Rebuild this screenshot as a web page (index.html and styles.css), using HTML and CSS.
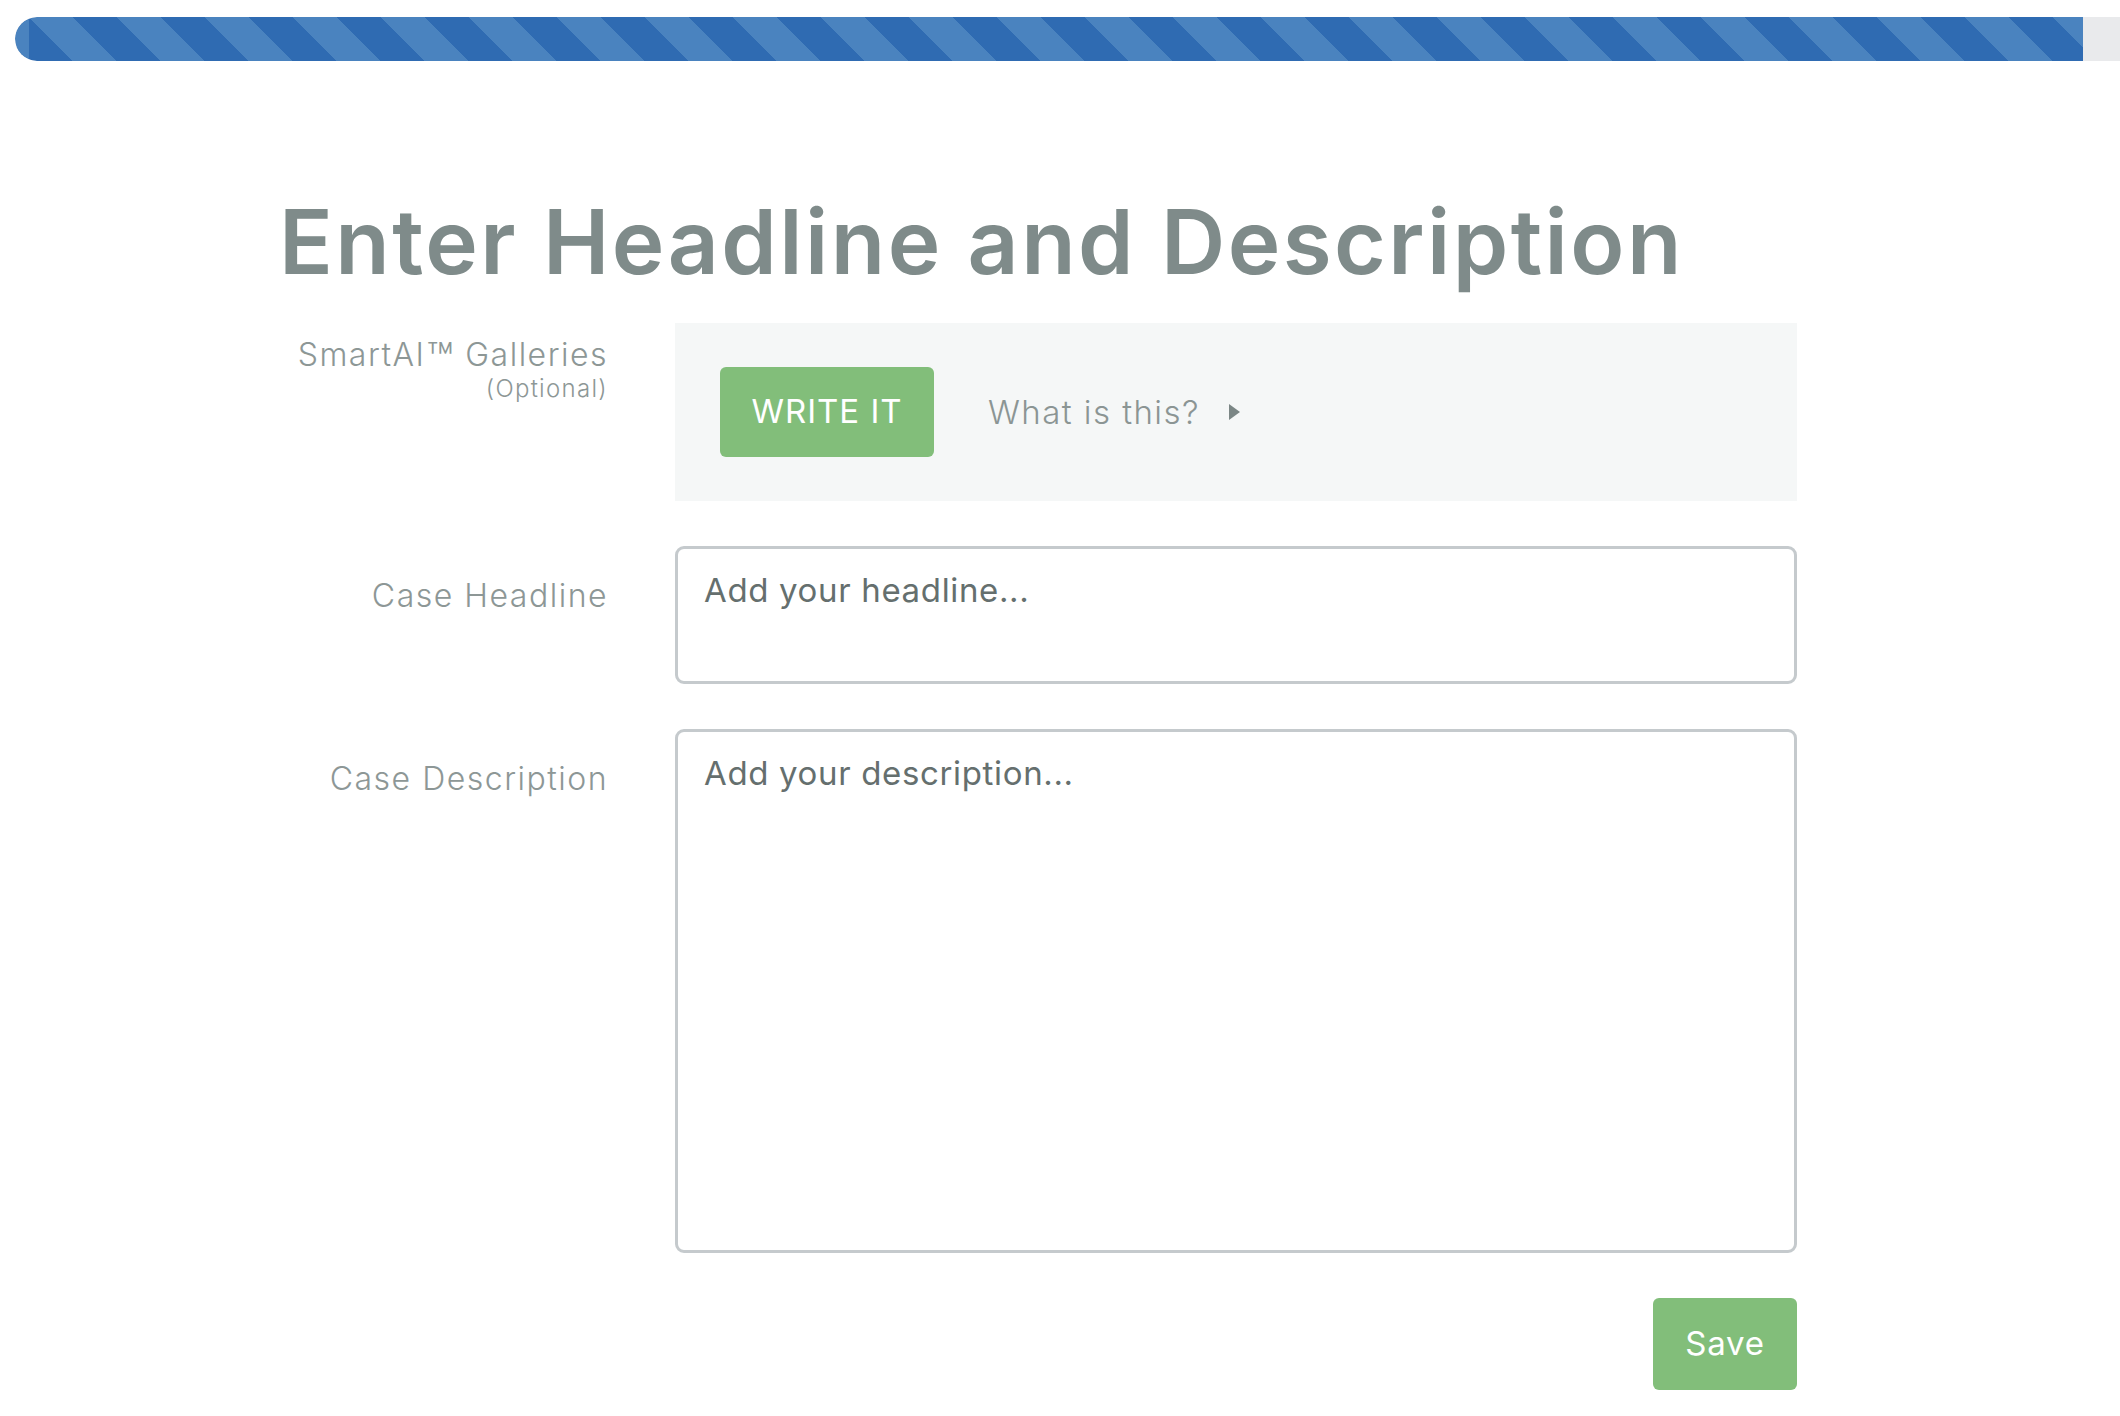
FILE: index.html
```html
<!DOCTYPE html>
<html lang="en">
<head>
<meta charset="utf-8">
<title>Enter Headline and Description</title>
<link rel="stylesheet" href="styles.css">
</head>
<body>
<div class="progress">
  <div class="progress-bar" style="width: 98.24%"></div>
</div>

<main class="page">
  <h1 class="title">Enter Headline and Description</h1>

  <div class="form">
    <div class="label label-smart">
      <div class="label-main">SmartAI<span class="tm">™</span>Galleries</div>
      <div class="label-sub">(Optional)</div>
    </div>
    <div class="smart-panel">
      <button class="btn btn-green btn-write" type="button">WRITE IT</button>
      <a class="what-link" href="#">What is this?<span class="caret"></span></a>
    </div>

    <label class="label" for="headline">Case Headline</label>
    <textarea id="headline" class="field field-headline" placeholder="Add your headline..."></textarea>

    <label class="label" for="description">Case Description</label>
    <textarea id="description" class="field field-description" placeholder="Add your description..."></textarea>

    <div class="actions">
      <button class="btn btn-green btn-save" type="button">Save</button>
    </div>
  </div>
</main>
</body>
</html>
```

FILE: styles.css
```css
html, body {
  margin: 0;
  padding: 0;
  background: #ffffff;
  overflow: hidden;
}

body {
  font-family: Inter, "Open Sans", "Liberation Sans", sans-serif;
  color: #7f8b8a;
}

.progress {
  margin: 17px 0 0 15px;
  height: 44px;
  background: #e9eaec;
  border-radius: 22px 0 0 22px;
  overflow: hidden;
}

.progress-bar {
  height: 100%;
  border-radius: 22px 0 0 22px;
  background-color: #3a74b8;
  background-image: repeating-linear-gradient(45deg,
    #2f6bb2 0px, #2f6bb2 31px,
    #4a83bf 31px, #4a83bf 62.2px);
  background-position: 14px 0;
}

.page {
  padding: 0 0 0 275px;
  width: 1522px;
}

.title {
  margin: 127px 0 0 4px;
  font-size: 89px;
  line-height: 107px;
  font-weight: 600;
  letter-spacing: 2.45px;
  white-space: nowrap;
  color: #7f8b8a;
}

.form {
  margin-top: 28px;
  display: grid;
  grid-template-columns: 333px 1122px;
  column-gap: 67px;
  row-gap: 45px;
}

.label {
  display: block;
  text-align: right;
  font-size: 32px;
  line-height: 40px;
  font-weight: 300;
  letter-spacing: 1.5px;
  color: #8d9796;
  padding-top: 30px;
}

.label-smart {
  padding-top: 12px;
}

.tm {
  display: inline-block;
  font-size: 1.4em;
  line-height: 0;
  margin: 0 12px 0 1px;
  letter-spacing: 0;
  vertical-align: -0.2em;
}

.label-sub {
  font-size: 24px;
  line-height: 28px;
  letter-spacing: 1.3px;
}

.smart-panel {
  background: #f5f7f7;
  height: 178px;
  box-sizing: border-box;
  padding: 44px 45px;
  display: flex;
  align-items: center;
  gap: 54px;
}

.btn {
  border: none;
  border-radius: 6px;
  font-family: Inter, "Open Sans", "Liberation Sans", sans-serif;
  color: #ffffff;
  cursor: pointer;
  padding: 0;
}

.btn-green {
  background: #82be7a;
}

.btn-write {
  width: 214px;
  height: 90px;
  font-size: 33px;
  font-weight: 400;
  letter-spacing: 1px;
  padding-bottom: 2px;
}

.what-link {
  display: flex;
  align-items: center;
  gap: 29px;
  font-size: 33px;
  font-weight: 300;
  letter-spacing: 1.45px;
  color: #8b9594;
  text-decoration: none;
}

.caret {
  width: 0;
  height: 0;
  border-top: 8.5px solid transparent;
  border-bottom: 8.5px solid transparent;
  border-left: 11px solid #7b8685;
}

.field {
  display: block;
  box-sizing: border-box;
  width: 100%;
  margin: 0;
  border: 3px solid #c5cacd;
  border-radius: 9px;
  padding: 21px 26px;
  font-family: Inter, "Open Sans", "Liberation Sans", sans-serif;
  font-size: 33px;
  line-height: 40px;
  letter-spacing: 0.65px;
  color: #5f6968;
  background: #ffffff;
  resize: none;
  outline: none;
  overflow: hidden;
}

.field::placeholder {
  color: #656f6e;
  opacity: 1;
}

.field-headline {
  height: 138px;
}

.field-description {
  height: 524px;
}

.actions {
  grid-column: 2;
  display: flex;
  justify-content: flex-end;
}

.btn-save {
  width: 144px;
  height: 92px;
  font-size: 33px;
  font-weight: 400;
  letter-spacing: 0.8px;
  padding-bottom: 3px;
}
```
